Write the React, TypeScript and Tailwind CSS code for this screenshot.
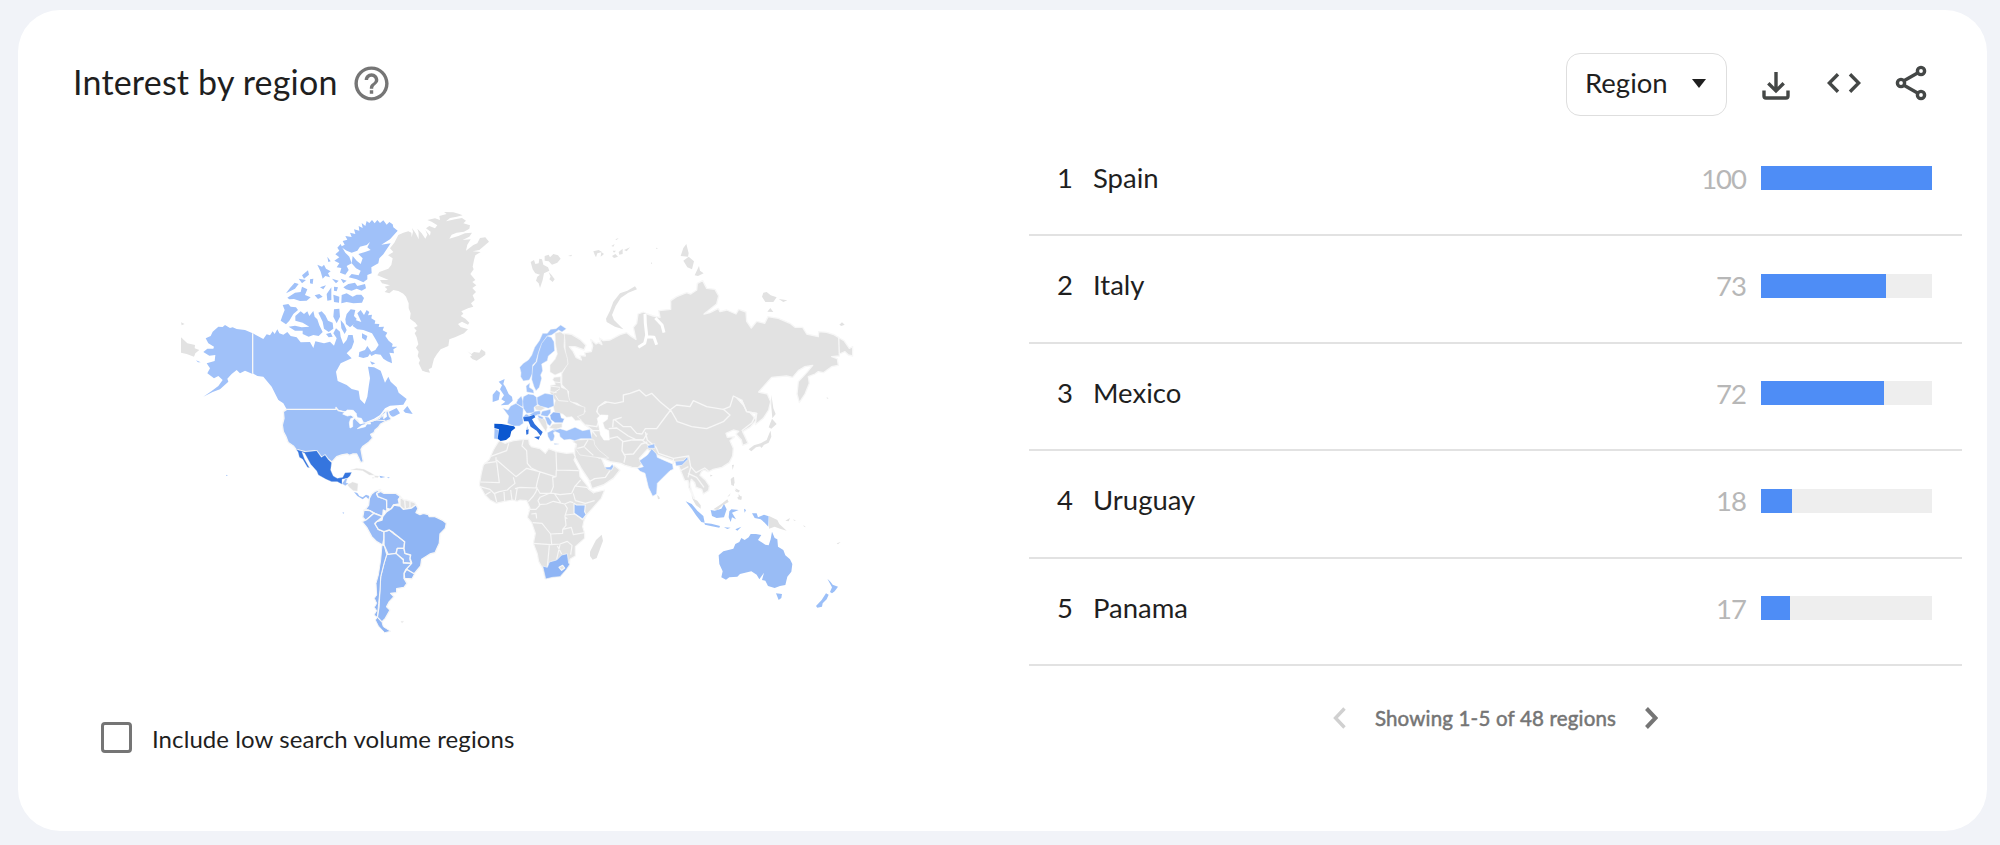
import { useState } from "react";

const regions = [
  { name: "Spain", value: 100 },
  { name: "Italy", value: 73 },
  { name: "Mexico", value: 72 },
  { name: "Uruguay", value: 18 },
  { name: "Panama", value: 17 },
];

function HelpIcon() {
  return (
    <svg viewBox="0 0 24 24" className="size-[41px] fill-[#757575]">
      <path d="M11 18h2v-2h-2v2zm1-16C6.48 2 2 6.48 2 12s4.48 10 10 10 10-4.48 10-10S17.52 2 12 2zm0 18c-4.41 0-8-3.59-8-8s3.59-8 8-8 8 3.59 8 8-3.59 8-8 8zm0-14c-2.21 0-4 1.79-4 4h2c0-1.1.9-2 2-2s2 .9 2 2c0 2-3 1.75-3 5h2c0-2.25 3-2.5 3-5 0-2.21-1.79-4-4-4z" />
    </svg>
  );
}

function DownloadIcon() {
  return (
    <svg viewBox="0 0 28 28" className="mt-[5px] h-7 w-7" fill="none" stroke="#444746" strokeWidth="3.4">
      <path d="M14 0v19M6.3 11.2l7.7 7.7 7.7-7.7" />
      <path d="M2 18.5V24a2 2 0 0 0 2 2h20a2 2 0 0 0 2-2v-5.5" />
    </svg>
  );
}

function CodeIcon() {
  return (
    <svg viewBox="0 0 34 20" className="h-5 w-[34px]" fill="none" stroke="#444746" strokeWidth="3.4">
      <path d="M11 1.2 2.3 10l8.7 8.8M23 1.2l8.7 8.8-8.7 8.8" />
    </svg>
  );
}

function ShareIcon() {
  return (
    <svg viewBox="0 0 32 36" className="-ml-[3px] h-9 w-8" fill="none" stroke="#444746" strokeWidth="3.4">
      <path d="M8.5 16 23 7.8M8.5 20 23 28.2" />
      <circle cx="6" cy="18" r="3.6" />
      <circle cx="26" cy="6" r="3.6" />
      <circle cx="26" cy="30" r="3.6" />
    </svg>
  );
}

function WorldMap() {
  return (
    <svg
      viewBox="0 0 2070 1320"
      className="h-[440px] w-[690px]"
      stroke="#f7f7f7"
      strokeWidth="4"
      strokeLinejoin="round"
    >
      {/* Canada, Alaska */}
      <g fill="#a0c1f9" strokeWidth="0">
        <path d="M248 400 225 390 200 387 188 382 180 384 165 375 158 381 145 380 128 395 122 408 107 415 115 430 132 440 130 446 112 446 100 456 118 467 136 465 134 483 110 490 120 505 112 520 132 535 145 528 158 540 145 558 125 573 100 590 128 576 150 568 175 545 172 536 185 522 200 510 210 520 225 512 248 522Z" />
        <path d="M248 400 280 417 290 403 300 406 308 394 314 402 322 388 328 400 340 404 352 396 362 408 380 412 392 427 420 426 430 444 436 424 462 430 480 425 492 437 500 415 490 400 498 385 510 395 512 410 520 432 530 420 535 405 548 405 552 425 545 445 530 460 545 475 512 490 498 515 503 543 530 555 545 567 566 572 570 598 584 612 592 590 596 560 600 535 594 500 612 502 632 512 640 535 645 548 655 530 662 545 680 562 686 578 710 597 700 614 660 617 645 625 630 645 612 656 590 665 572 680 560 668 562 648 545 630 525 635 500 628 350 628 340 610 325 600 305 560 280 530 262 528 248 520Z" />
        <path d="M248 400V521" stroke="#f7f7f7" strokeWidth="4" />
        <path d="M262 530 275 540 292 562 300 570M305 575 318 600 335 625M322 598 345 632" fill="none" stroke="#fff" strokeWidth="3" strokeDasharray="5 4" />
        <path d="M683 92 670 82 668 73 658 66 650 74 640 61 630 69 622 60 614 70 606 60 598 69 590 63 586 78 575 69 578 84 566 78 568 92 552 88 556 102 540 98 545 111 526 108 532 119 518 123 524 134 512 140 530 152 545 158 562 152 570 140 590 135 600 126 592 142 602 150 585 156 565 162 578 175 572 192 560 182 548 168 545 190 558 205 572 212 566 226 545 222 536 232 560 238 580 247 592 238 592 225 605 220 604 202 625 190 628 175 640 163 650 148 662 130 634 134 660 118Z" />
        <path d="M512 132 502 143 508 152 496 163 508 172 493 182 508 190 500 202 514 204 510 218 526 224 536 210 530 198 545 190 538 170 526 158 518 145Z" />
        <path d="M520 262 535 252 555 248 562 258 585 252 588 265 575 272 560 266 545 272 528 268ZM515 285 530 280 548 290 560 284 574 284 582 294 576 308 550 310 530 306 514 310ZM490 284 508 290 507 308 492 306ZM470 282 484 262 484 300 472 302ZM492 260 504 262 500 274 492 272Z" />
        <path d="M348 280 360 264 374 248 386 252 375 266ZM396 226 414 211 417 224 402 236ZM442 194 456 200 462 194 468 206 482 214 474 220 480 232 466 228 458 236 452 215ZM352 293 375 278 392 276 396 260 412 268 405 285 422 292 410 302 390 303 372 297 358 298ZM420 238 430 236 428 252 420 250ZM472 170 482 184 475 186ZM486 236 506 242 498 250ZM512 236 530 242 520 250ZM434 286 448 282 458 290 444 297ZM450 262 468 256 460 268ZM386 236 408 240 396 250Z" />
        <path d="M338 315 355 312 362 320 378 322 384 330 370 342 358 362 348 373 332 362 338 345 344 330Z" />
        <path d="M376 348 392 334 402 342 412 334 418 348 430 333 434 350 442 358 448 376 458 396 446 408 430 405 416 410 398 402 398 392 375 392 356 380 375 377 395 382 418 380 398 368 376 362Z" />
        <path d="M445 338 455 334 466 346 474 362 488 368 490 386 476 396 462 386 458 365ZM492 328 508 326 510 350 500 370 490 350ZM468 402 482 398 488 410 476 412ZM512 360 522 372 530 390 524 402 514 385Z" />
        <path d="M530 342 542 328 556 330 552 348 560 356 552 372 540 382 528 372 526 358Z" />
        <path d="M562 340 572 330 582 345 590 330 598 336 594 346 606 344 604 355 616 362 614 371 628 372 626 381 642 380 638 391 652 398 646 408 656 422 668 432 666 440 682 440 670 448 672 460 658 458 664 474 666 490 652 484 640 476 632 464 616 462 604 468 598 458 616 450 626 435 618 420 606 400 590 394 580 390 562 388 548 378 556 360 574 366Z" />
        <path d="M568 456 585 450 592 438 604 455 594 470 580 474 566 470ZM576 400 592 408 588 422 576 414ZM600 484 616 490 606 494Z" />
        <path d="M700 632 712 618 720 630 728 642 706 638ZM655 636 680 624 690 640 668 652 660 644Z" />
        <path d="M78 481 92 487 84 487Z" />
      </g>
      <g fill="#e2e2e2" strokeWidth="0">
        <path d="M33 412 52 430 75 435 74 445 88 450 76 460 72 470 50 462 33 458ZM33 367 44 372 35 376Z" />
      </g>

      {/* Greenland, Iceland */}
      <g transform="translate(510 0)" fill="#e2e2e2" strokeWidth="0">
        <path d="M175 105 190 98 205 94 214 98 215 112 219 95 216 84 227 100 236 118 236 98 232 86 245 100 256 116 262 104 256 90 270 107 272 95 258 85 268 78 285 85 292 76 275 65 262 60 285 55 300 60 298 48 320 42 312 36 340 37 358 42 368 46 350 50 330 54 318 64 345 58 366 54 378 62 370 70 390 76 388 86 372 95 350 98 335 104 328 116 355 108 375 100 396 98 388 110 368 120 392 118 382 134 378 152 400 135 412 130 420 114 436 112 447 125 432 138 418 150 398 154 422 156 406 166 402 180 398 200 401 208 391 222 406 240 397 246 409 256 397 264 408 276 398 286 404 300 393 310 400 320 384 325 364 334 370 341 362 348 376 356 388 368 384 374 366 365 354 372 362 381 384 388 372 400 345 412 328 418 325 438 302 448 291 462 282 476 275 503 266 508 270 518 258 516 247 512 236 490 240 481 233 468 236 455 228 443 235 433 230 412 224 400 230 392 222 383 233 378 226 368 210 356 212 340 206 325 206 310 198 290 190 281 175 273 160 270 148 280 134 276 142 268 134 260 150 256 126 250 120 240 146 240 112 226 118 216 145 206 154 195 158 175 144 166 160 156 150 145 163 128Z" />
        <path d="M382 454 394 462 402 456 418 458 424 448 436 456 436 464 426 472 410 482 398 478 390 470 396 466Z" />
      </g>

      {/* USA, Central and South America */}
      <g transform="translate(270 510)" fill="#9dbff7">
        <path d="M80 118 228 118 228 112 235 122 255 126 275 135 300 160 320 158 345 150 360 140 372 125 384 122 388 138 395 148 375 155 362 162 355 172 345 180 342 188 332 193 338 204 325 218 308 230 303 238 306 255 310 275 302 278 296 264 290 252 278 252 268 256 262 252 245 255 230 260 216 276 205 268 195 255 185 262 170 242 135 245 108 238 100 228 85 218 78 200 70 185 67 165 72 145 70 125Z" />
        <g fill="#fff" stroke="#fff" strokeWidth="2">
          <path d="M248 132 262 120 280 121 290 132 286 138 272 136 262 138ZM272 146 284 142 278 152 278 170 270 174 268 158ZM286 142 304 145 310 157 302 162 294 150ZM292 176 306 166 320 162 316 170ZM316 162 330 157 332 162ZM370 133 378 126 380 140 372 145ZM398 140 410 146 390 154Z" />
        </g>
        <path d="M315 162 360 145 385 120M345 150 376 152M365 130 372 148" fill="none" strokeWidth="3" />
        <path
          d="M108 238 134 246 170 242 184 262 195 255 206 270 215 278 212 300 220 318 232 325 248 322 255 308 275 307 270 318 262 325 246 328 246 343 232 335 215 335 198 328 175 315 170 303 152 283 134 250 126 246 134 268 149 294 142 292 128 268 118 262 114 246Z"
          fill="#3575de"
          strokeWidth="1"
        />
        <path d="M246 341 256 326 262 326 258 338 266 340 256 347Z" strokeWidth="1" />
        <path d="M262 344 278 336 294 341 292 363 280 362 268 352ZM272 300 290 295 312 298 332 308 344 316 328 315 308 302 290 300ZM344 317 356 318 354 323 344 322ZM338 322 344 324 337 325Z" fill="#e2e2e2" strokeWidth="1" />
        <path d="M358 317 376 321 362 324ZM382 321 390 323 384 325ZM282 366 292 369 298 378 308 382 318 374 328 378 326 388 318 380 308 388 292 378ZM248 426 253 429 249 431Z" strokeWidth="0" />
        <g fill="#97baf6">
          <path d="M328 385 335 372 345 364 362 358 350 372 354 380 378 388 382 402 380 425 370 420 368 440 345 430 325 420 315 420 326 405Z" />
          <path d="M354 380 350 370 362 364 372 370 390 370 408 370 422 380 415 388 418 402 400 405 392 418 380 415 380 390Z" />
          <path d="M312 420 330 422 342 430 328 442 318 452 308 442Z" />
          <path d="M306 455 318 450 328 442 342 430 368 440 345 460 355 478 372 485 372 505 368 525 350 515 335 500 320 472Z" />
          <path d="M372 485 388 480 400 490 415 500 434 515 432 535 412 535 408 550 385 554 372 525Z" />
          <path d="M412 535 432 535 435 550 452 555 450 570 455 580 430 578 430 568 408 552Z" />
        </g>
        <path d="M420 380 432 390 440 390 464 398 468 405 455 414 430 418 420 410Z" fill="#e2e2e2" />
        <path d="M434 392 436 414M450 395 450 412" />
        <path d="M368 440 380 425 395 415 402 405 420 408 430 418 455 414 468 404 474 416 468 428 480 434 490 430 505 434 508 440 525 440 550 452 559 460 556 475 540 492 538 520 525 548 510 552 485 568 482 588 462 612 438 598 455 578 450 565 452 555 435 550 432 535 434 515 415 500 400 488 388 480 372 485 355 478 345 462 350 455 366 450Z" fill="#8fb5f4" />
        <path d="M440 598 464 612 456 627 434 625 432 610Z" fill="#8fb5f4" />
        <path d="M380 554 408 550 430 570 430 579 455 580 438 598 432 610 432 625 441 640 432 652 410 656 410 668 392 670 402 680 388 695 380 710 390 720 376 745 366 756 352 742 357 710 360 650 362 620 372 580Z" fill="#93b8f5" />
        <path d="M366 525 373 528 380 554 372 580 362 620 360 660 356 700 352 742 366 757 370 770 392 784 374 788 355 768 346 750 352 742 342 735 350 722 343 712 350 700 343 685 350 675 348 640 355 615 362 570Z" fill="#8fb5f4" strokeWidth="3" />
        <path d="M422 754 432 754 426 759Z" fill="#e2e2e2" strokeWidth="1" />
      </g>

      {/* Asia mainland */}
      <g transform="translate(1170 120)" fill="#e2e2e2">
        <path d="M112 500 240 440 500 440 590 540 570 562 548 575 556 592 564 610 548 616 544 600 528 582 536 574 520 570 498 580 502 592 524 590 510 602 520 625 518 648 508 668 486 682 460 688 444 696 432 690 424 696 420 706 436 720 448 738 446 752 430 762 425 748 408 742 404 728 394 718 390 732 394 750 404 776 398 768 386 742 384 722 374 722 362 692 354 672 338 662 290 645 262 628 238 655 246 672 234 684 216 682 195 676 182 670 150 665 128 655 112 636 100 622 92 600 96 570 76 555 90 550 110 560Z" />
        <path d="M50 605 90 600 100 622 112 640 126 658 136 682 154 690 162 676 180 690 160 715 130 735 96 746 88 722 64 686 44 650 44 628Z" />
        <path d="M135 682 150 681 157 673 160 680 154 690 140 688Z" fill="#a1c3fa" strokeWidth="1" />
        <path d="M12 280 35 283 60 298 78 316 72 330 45 320 28 320 40 335 48 352 64 360 60 346 76 348 74 338 94 335 98 318 92 298 108 312 116 308 126 314 118 294 130 302 150 300 180 284 200 278 215 290 228 298 220 262 230 250 234 222 250 216 262 222 280 228 300 232 296 212 332 208 332 182 350 170 380 158 392 162 410 150 412 130 428 122 440 145 465 148 476 168 470 192 432 222 450 218 475 205 480 215 500 210 528 222 536 208 558 216 560 244 574 264 590 244 614 250 624 230 655 235 690 250 705 262 728 262 740 282 775 290 776 275 800 277 822 284 838 294 852 302 868 325 878 320 878 348 865 345 855 335 838 342 838 348 815 350 832 356 835 376 815 380 790 398 775 395 765 402 745 410 748 430 735 462 718 488 711 462 715 425 740 398 758 376 735 380 715 392 698 412 680 408 635 412 596 456 622 462 632 485 626 510 610 535 586 554 590 520 560 515 545 480 520 468 510 500 490 508 440 500 400 482 390 500 350 495 330 510 300 485 275 460 258 468 238 450 210 460 190 465 190 485 165 490 135 485 115 500 110 515 122 530 110 560 75 555 60 540 40 530 75 515 72 505 50 490 25 485 25 455 5 435 5 400 22 370 15 350 14 300Z" />
        <g fill="none" stroke="#fff" strokeWidth="9">
          <path d="M255 222 256 250 260 285 254 310 235 322M286 234 306 255 312 278M262 290 282 292 290 314" />
        </g>
        <path d="M112 535 122 525 144 526 142 538 128 548 134 566 146 572 148 600 132 600 122 585 118 565Z" fill="#fff" stroke="#fff" strokeWidth="2" />
        <path d="M4 550 20 530 34 528 48 545 80 562 64 570 40 564 6 572Z" fill="#fff" stroke="none" />
        <g fill="none">
          <path d="M158 562 160 540 185 532M165 540 190 560 212 560 230 580 246 582 256 566 290 566 318 528 332 510 352 545 395 560 440 566 490 545 510 525 490 508" />
          <path d="M146 566 170 564 205 588 226 598 250 600 262 580M148 596 172 590 190 605 215 600 242 600M188 605 186 632 196 650 192 668M190 644 220 642 244 612 262 606" />
          <path d="M256 576 262 600 288 622 296 640 340 655 358 652 386 648 392 680 408 698 434 684 446 694" />
          <path d="M246 600 270 618M340 655 340 672M362 692 385 680M392 682 384 712M384 700 410 712 432 742" />
          <path d="M545 480 560 515 590 520 576 548 545 572M836 290 838 342" />
          <path d="M50 620 72 622 92 600M72 620 98 645 120 655M86 726 104 716 136 712 150 692M96 572 110 590M78 556 96 572 120 572M60 605 58 625" />
        </g>
        <g fill="#a1c3fa" strokeWidth="2">
          <path d="M275 626 290 642 292 652 315 662 338 672 340 688 330 692 310 712 292 730 290 762 278 769 265 742 255 700 240 694 232 685 250 680 238 662 262 645Z" />
          <path d="M262 617 284 611 285 625 265 625ZM345 664 370 662 382 650 384 658 366 676 348 678Z" />
        </g>
        <g strokeWidth="0">
          <path d="M150 212 160 185 180 160 202 152 225 139 231 148 205 158 182 174 167 198 156 225 162 240 190 268 165 260 140 246 138 236Z" />
          <path d="M362 48 370 24 379 12 386 40 384 50ZM352 56 362 58M370 62 386 50 402 64 396 88 382 82ZM404 106 417 78 420 92 431 100 414 108ZM606 170 610 158 620 156 632 166 650 172 640 186 616 186ZM656 177 682 181 670 186ZM622 215 631 204 640 216ZM838 254 846 247 854 254 844 258Z" />
          <path d="M566 628 582 616 602 610 620 600 628 580 632 572 634 590 626 608 604 618 588 622 574 634ZM626 562 636 536 650 552 634 566ZM634 464 640 505 647 522 637 535 634 500ZM516 675 522 674 518 690ZM600 618 612 616 604 624ZM800 472 806 475 801 476Z" />
          <path d="M514 715 522 710 524 730 516 735ZM526 745 540 752 534 758ZM536 762 546 775 536 778ZM293 765 299 773 294 778Z" />
        </g>
      </g>

      {/* Africa, Europe */}
      <g transform="translate(870 300)" fill="#e2e2e2" strokeWidth="3.5">
        <path d="M115 425 120 422 135 430 160 422 190 418 206 418 208 432 214 440 240 446 256 460 266 446 290 455 320 460 340 458 346 470 342 480 358 510 360 530 372 545 384 560 386 568 402 577 434 570 424 595 400 622 380 645 372 662 368 680 374 700 374 715 346 740 346 768 330 778 328 798 300 830 280 832 255 837 248 805 236 785 232 762 220 730 226 700 215 668 202 652 210 625 200 602 180 600 172 604 158 600 130 605 108 610 90 600 75 585 58 555 64 520 70 495 88 478 100 450Z" />
        <path d="M390 755 408 720 425 704 429 722 410 774 398 779 390 768Z" strokeWidth="0" />
        <path d="M90 470 140 452 146 430M72 490 108 485 108 472M110 485 118 548 62 546M110 480 168 530 200 505 238 515M190 420 186 438 200 452 202 490 214 504 238 515 285 530M288 455 290 510 356 512M289 510 288 530 278 532 280 560 272 580M160 532 165 550 150 562 142 570 118 575 104 580M165 566 180 562 228 564 232 545 240 515M172 562 166 600M132 576 134 606M152 570 156 600M104 582 110 606M60 560 90 568 104 582M76 585 92 575M232 562 228 575 220 588 205 605M232 566 240 580 280 580 300 584 335 580M272 578 240 592 234 602 240 615M236 614 260 612 280 604 314 612 330 605 340 608M205 628 228 628 240 615M214 642 228 640 230 655M218 668 246 670 262 690 272 702 275 732M302 608 284 582M335 580 344 560 362 540M344 558 380 562 402 580M340 580 346 602 376 610 404 602M314 612 322 625 315 648 318 676 308 688M318 645 345 642 370 660M316 652 322 656M272 702 308 700 308 688 334 682 340 704 374 698M220 730 272 734 300 732 322 724 336 736 332 764M268 736 264 780 262 800M300 734 290 778M292 738 305 762" fill="none" />
        <path d="M248 798 262 802 268 786 290 780 305 765 322 761 326 790 330 792 318 810 300 830 278 832 257 837Z" fill="#8fb5f5" strokeWidth="2" />
        <path d="M297 802 308 796 314 804 305 811Z" />
        <path d="M342 610 350 615 376 615 374 635 379 644 368 658 342 640Z" fill="#9bbef8" />
        <g strokeWidth="2">
          <path d="M285 100 300 95 314 104 312 140 322 175 324 192 306 216 285 225 270 216 270 195 285 178 292 162 286 130Z" />
          <path d="M282 232 302 230 302 246 304 262 322 270 326 290 330 304 352 315 375 322 372 342 352 350 364 360 346 362 336 350 320 352 308 342 284 338 280 320 286 302 270 278 272 256 286 254 284 245 278 240Z" />
          <path d="M270 258 300 262M280 280 300 266M286 286 296 302 325 304M285 246 302 248M270 275 290 278" fill="none" strokeWidth="3" />
          <path d="M222 318 240 316 256 324 242 332 228 330ZM232 355 246 350 258 362 262 382 258 395 246 378ZM278 372 306 370 306 382 288 388 268 384ZM160 372 165 372 164 376Z" />
          <path d="M338 425 352 420 388 418 402 420 404 434 416 450 446 474 430 475 360 465 348 448 350 432Z" />
        </g>
        <path d="M352 445 372 440 384 420M374 442 400 466" fill="none" />
        <g fill="#a1c3fa" strokeWidth="1.5">
          <path d="M183 218 179 202 190 190 205 180 215 166 224 142 238 122 248 100 262 100 272 88 288 86 302 75 319 86 306 96 296 90 285 98 275 105 262 108 250 125 240 145 232 170 228 185 218 195 218 220 208 240 190 243 182 230Z" />
          <path d="M262 108 274 112 282 125 284 152 265 168 262 182 245 192 248 212 242 225 245 235 238 262 228 272 222 260 215 238 218 200 230 185 235 160 245 130Z" />
          <path d="M198 258 210 248 208 262 220 270 222 280 200 276Z" />
          <path d="M116 245 134 237 130 252 136 260 146 282 156 290 158 302 145 314 122 316 136 305 124 298 132 286 120 268 126 256ZM98 284 110 270 120 278 116 300 98 306Z" strokeWidth="0" />
          <path d="M103 385 116 390 113 418 102 416Z" />
          <path d="M128 324 144 330 152 318 168 310 190 325 188 352 190 370 178 378 160 378 142 370 146 348Z" />
          <path d="M168 310 174 298 184 288 190 305 188 322Z" />
          <path d="M190 290 205 282 220 284 230 292 232 314 222 322 224 338 200 340 190 325 188 305Z" />
          <path d="M231 292 255 280 280 284 282 318 265 325 240 318 232 312Z" />
          <path d="M205 346 225 334 240 332 242 342 225 348ZM188 352 198 342 210 346 205 356 190 358ZM246 334 272 328 272 338 262 350 242 346ZM254 350 266 352 276 366 270 378 262 372ZM232 344 250 352 248 358 236 354Z" />
          <path d="M270 346 280 336 300 338 304 354 313 356 308 368 285 368 272 358Z" fill="#94b9f7" />
          <path d="M262 398 282 388 296 388 280 398 284 408 280 422 272 424 264 410ZM282 430 298 432 284 434Z" />
          <path d="M280 392 300 386 320 392 345 382 368 392 390 388 396 416 362 416 344 422 330 418 312 420 300 410 298 400Z" />
          <path d="M198 390 203 376 204 386Z" />
        </g>
        <path d="M190 352 205 350 222 344 226 352 216 358 224 372 236 385 248 396 242 408 230 392 212 380 205 364 192 364ZM222 411 240 409 236 419ZM198 390 206 388 205 402 199 404Z" fill="#2f70dd" strokeWidth="0" />
        <path d="M103 371 125 372 162 379 166 384 154 394 150 410 138 420 122 423 113 416 117 388 103 384Z" fill="#0b57d0" strokeWidth="0" />
      </g>

      {/* Svalbard, Franz Josef Land */}
      <g transform="translate(990 90)" fill="#e2e2e2" stroke="none">
        <path d="M92 96 102 90 106 102 116 100 118 86 126 88 130 104 144 112 148 122 132 130 128 150 120 174 116 160 108 152 112 140 120 134 106 130 98 118ZM134 78 146 74 150 82 160 72 174 76 182 86 172 98 156 104 146 94 134 92ZM146 126 154 134 164 148 158 156 148 148 152 140ZM204 78 216 74 214 79Z" />
        <path d="M280 64 296 60 306 66 292 70 288 82 284 74ZM304 66 312 72 302 80ZM336 78 346 72 354 80 342 84ZM356 66 368 56 368 72 358 74ZM372 60 390 52 380 64ZM334 48 344 42 340 50ZM338 62 348 62 342 68ZM346 28 356 24 350 30ZM468 53 474 55 469 57ZM453 97 457 100 453 102Z" />
      </g>

      {/* Southeast Asia, Oceania */}
      <g transform="translate(1410 690)" fill="#9bbff8" strokeWidth="0">
        <path d="M154 194 160 206 172 212 182 226 182 236 168 226 158 208ZM220 238 244 222 262 208 266 216 248 226 232 240ZM387 258 412 270 418 282 440 302 420 296 404 290 387 296ZM272 148 282 145 282 168 274 165ZM284 178 294 184 288 186ZM292 202 305 198 304 210 294 208ZM262 200 272 190 268 198ZM210 134 218 136 212 140ZM52 194 60 206 54 208ZM436 272 450 264 446 274ZM460 268 468 272 462 272ZM490 285 498 292 492 290ZM590 340 602 336 594 343Z" fill="#e2e2e2" />
        <path d="M137 214 155 222 172 242 190 258 194 278 184 276 168 256 156 238ZM193 279 214 281 240 288 238 293 212 288 195 284ZM212 240 224 242 244 236 252 222 260 238 252 262 230 264 216 258ZM268 244 274 238 296 240 276 248 288 268 276 262 272 276 266 262ZM312 236 318 240 314 248ZM336 250 350 250 354 262 372 254 386 259 385 290 374 278 362 268 344 264ZM252 292 272 293 262 297ZM286 298 304 290 292 302Z" />
        <path d="M236 376 250 364 280 356 286 342 298 336 304 324 314 330 326 322 332 312 348 312 364 315 354 330 376 344 386 346 392 328 396 305 404 324 412 328 414 350 430 360 436 376 450 388 457 402 454 425 442 440 436 465 420 468 404 474 384 468 376 452 366 450 372 428 358 448 350 434 334 424 300 432 292 440 268 442 258 449 244 442 248 424 238 402Z" fill="#99bcf5" />
        <path d="M408 490 426 492 424 504 416 510ZM562 446 572 456 578 464 594 470 584 484 576 490 570 486 576 472ZM528 528 545 510 558 490 566 494 560 508 548 520 546 530 532 533Z" />
      </g>
      <path d="M168 824 174 827 169 828Z" fill="#a0c1f9" stroke="none" />
    </svg>
  );
}

export default function App() {
  const [includeLow, setIncludeLow] = useState(false);

  return (
    <div className="h-[845px] w-[2000px] overflow-hidden bg-[#f1f3f8] pt-[10px] pl-[18px] font-['Lato',sans-serif] text-[#1f1f1f]">
      <div className="flex h-[821px] w-[1969px] flex-col rounded-[42px] bg-white">
        <header className="flex h-[118px] items-center justify-between pt-[30px] pr-[60px] pl-[55px]">
          <div className="flex items-center gap-[14px] pb-[2px]">
            <h1 className="w-[264px] pb-[2px] text-[34px] leading-none tracking-[0.2px] whitespace-nowrap">Interest by region</h1>
            <HelpIcon />
          </div>
          <div className="flex items-center">
            <button className="flex h-[63px] w-[161px] items-center justify-between rounded-[14px] border border-[#dedede] pr-[20px] pb-[2px] pl-[18px] text-[27.5px]">
              Region
              <svg viewBox="0 0 14 9" className="h-[9px] w-[14px] fill-[#1f1f1f]">
                <path d="M0 0h14L7 9z" />
              </svg>
            </button>
            <div className="flex items-center gap-[37px] pb-[2px] pl-[35px]">
              <DownloadIcon />
              <CodeIcon />
              <ShareIcon />
            </div>
          </div>
        </header>

        <div className="flex">
          <section className="flex w-[1011px] flex-col pt-[72px] pl-[82.5px]">
            <div className="pl-[69.5px]">
              <WorldMap />
            </div>
            <label className="mt-[78px] flex items-center gap-[20.5px] text-[24px] leading-[36px]">
              <input
                type="checkbox"
                checked={includeLow}
                onChange={(e) => setIncludeLow(e.target.checked)}
                className="size-[31px] appearance-none rounded-[4px] border-[3.5px] border-[#757575]"
              />
              <span className="pt-[3px] tracking-[0.08px]">Include low search volume regions</span>
            </label>
          </section>

          <section className="w-[933px] pt-[0.5px]">
            {regions.map((r, i) => (
              <div key={r.name} className="flex h-[107.5px] items-center border-b-2 border-[#e2e2e2] pr-[30px] pb-[6px] pl-[28px] text-[27.5px]">
                <span className="w-[36px] pb-[2px]">{i + 1}</span>
                <span className="flex-1 pb-[2px]">{r.name}</span>
                <span className="pr-[15px] tracking-[-1px] text-[#b7b7b7]">{r.value}</span>
                <div className="h-[24px] w-[171px] bg-[#eeeeee]">
                  <div className="h-full bg-[#4e8df6]" style={{ width: `${r.value}%` }} />
                </div>
              </div>
            ))}
            <div className="flex items-center justify-center gap-[29px] pt-[37px] text-[20.5px] text-[#757575]">
              <svg viewBox="0 0 13 22" className="h-[22px] w-[13px]" fill="none" stroke="#d0d0d0" strokeWidth="3.4">
                <path d="M11.5 1.5l-9 9.500 9 9.500" />
              </svg>
              <span className="tracking-[0.18px] [-webkit-text-stroke:0.5px_#757575]">Showing 1-5 of 48 regions</span>
              <svg viewBox="0 0 13 22" className="h-[22px] w-[13px]" fill="none" stroke="#757575" strokeWidth="4">
                <path d="M1.5 1.5l9 9.500-9 9.500" />
              </svg>
            </div>
          </section>
        </div>
      </div>
    </div>
  );
}
